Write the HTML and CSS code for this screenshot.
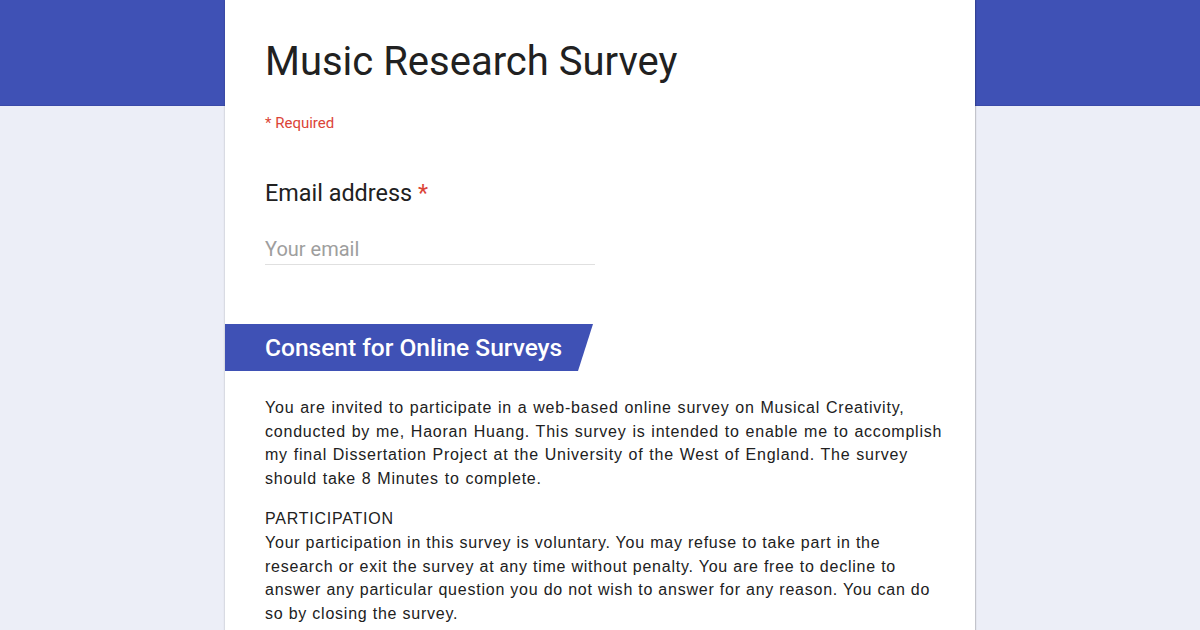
FILE: index.html
```html
<!DOCTYPE html>
<html>
<head>
<meta charset="utf-8">
<link rel="stylesheet" href="styles.css">
</head>
<body>
<div class="header-band"></div>
<main class="card">
  <h1 class="title">Music Research Survey</h1>
  <div class="required">* Required</div>
  <section class="question">
    <div class="q-label">Email address <span class="star">*</span></div>
    <div class="input">Your email</div>
  </section>
  <div class="section-banner">Consent for Online Surveys</div>
  <div class="desc">
    <p class="intro">You are invited to participate in a web-based online survey on Musical Creativity, conducted by me, Haoran Huang. This survey is intended to enable me to accomplish my final Dissertation Project at the University of the West of England. The survey should take 8 Minutes to complete.</p>
    <p class="narrow">PARTICIPATION<br>Your participation in this survey is voluntary. You may refuse to take part in the research or exit the survey at any time without penalty. You are free to decline to answer any particular question you do not wish to answer for any reason. You can do so by closing the survey.</p>
  </div>
</main>
</body>
</html>
```

FILE: styles.css
```css
html, body {
  margin: 0;
  padding: 0;
}
body {
  background: #eceef7;
  font-family: Roboto, "Noto Sans", sans-serif;
  color: #212121;
  height: 630px;
  overflow: hidden;
  position: relative;
}
.header-band {
  height: 105px;
  background: #3f51b5;
  border-bottom: 1px solid #3a4aa8;
}
.card {
  position: absolute;
  top: 0;
  left: 225px;
  width: 750px;
  height: 660px;
  background: #fff;
  box-shadow: 0 0 2px rgba(0,0,0,0.25), 1px 0 1px rgba(0,0,0,0.1);
  box-sizing: border-box;
  padding: 38px 0 0 0;
}
.title {
  margin: 0 0 0 40px;
  font-size: 40px;
  font-weight: 400;
  line-height: 48px;
  color: #212121;
}
.required {
  margin: 29px 0 0 40px;
  font-size: 15px;
  color: #db4437;
  line-height: 16px;
}
.question {
  margin: 48px 0 0 40px;
}
.q-label {
  font-size: 23.4px;
  line-height: 28px;
  color: #212121;
}
.star {
  color: #db4437;
}
.input {
  margin-top: 30px;
  width: 330px;
  font-size: 20px;
  color: #9e9e9e;
  line-height: 24px;
  padding-bottom: 3px;
  border-bottom: 1px solid #e0e0e0;
}
.section-banner {
  margin-top: 59px;
  width: 368px;
  height: 47px;
  box-sizing: border-box;
  background: #3f51b5;
  color: #fff;
  font-size: 24.5px;
  font-weight: 500;
  line-height: 47px;
  padding-left: 40px;
  clip-path: polygon(0 0, 100% 0, calc(100% - 15px) 100%, 0 100%);
}
.desc {
  margin: 25px 32px 0 40px;
  font-family: "Liberation Sans", Arial, sans-serif;
  font-size: 16px;
  line-height: 23.6px;
  color: #212121;
}
.desc p {
  margin: 0 0 17px 0;
}
.intro {
  letter-spacing: 0.78px;
  word-spacing: 0.6px;
}
.narrow {
  letter-spacing: 0.77px;
}
```
